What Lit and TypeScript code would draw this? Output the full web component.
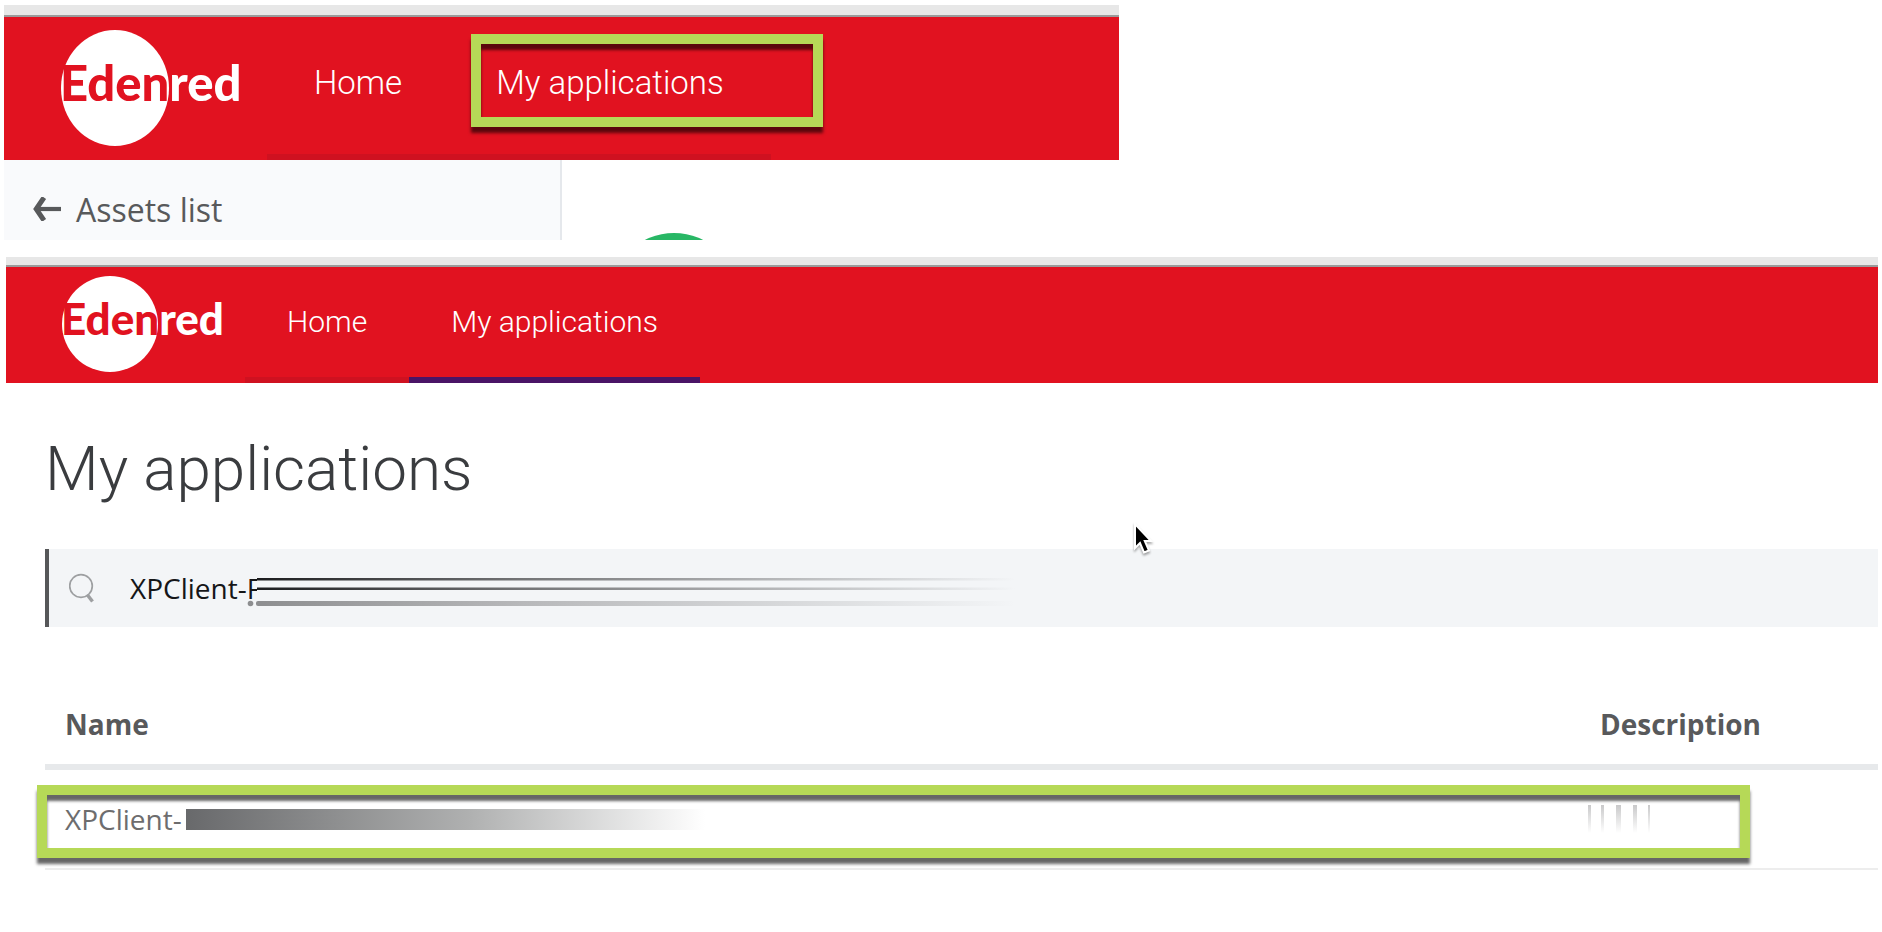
import { LitElement, html, css, svg } from "lit";
import { customElement } from "lit/decorators.js";

const logoLarge = html`
  <svg class="logo" width="180" height="118" viewBox="0 0 180 118" role="img" aria-label="Edenred">
    <ellipse cx="54" cy="58" rx="54" ry="58" fill="#fff" />
    ${svg`<text class="word" x="-1" y="71" font-size="49"><tspan fill="#e11220">Eden</tspan><tspan fill="#fff">red</tspan></text>`}
  </svg>
`;

const logoSmall = html`
  <svg class="logo" width="162" height="96" viewBox="0 0 162 96" role="img" aria-label="Edenred">
    <circle cx="48" cy="47" r="48" fill="#fff" />
    ${svg`<text class="word" x="-1" y="58" font-size="44"><tspan fill="#e11220">Eden</tspan><tspan fill="#fff">red</tspan></text>`}
  </svg>
`;

@customElement("app-root")
export class AppRoot extends LitElement {
  static styles = css`
    :host {
      display: block;
      background: #fff;
      color: #58595b;
      font-family: "Open Sans", "Noto Sans", sans-serif;
      overflow-x: hidden;
      padding-top: 5px;
    }
    * {
      box-sizing: border-box;
    }
    .assets {
      max-width: 1115px;
      margin-left: 4px;
    }
    .chrome {
      height: 12px;
      background: #e7e7e7;
      border-bottom: 2px solid #9b9b9b;
    }
    .apps .chrome {
      height: 10px;
    }
    .bar {
      display: flex;
      align-items: center;
      background: #e11220;
      height: 143px;
      padding-left: 57px;
    }
    .apps .bar {
      height: 116px;
      padding-left: 56px;
    }
    .logo {
      display: block;
      flex: none;
      overflow: visible;
    }
    .word {
      font-family: Lato, sans-serif;
      font-weight: 900;
    }
    nav {
      display: flex;
      align-self: stretch;
      margin-left: 26px;
    }
    .apps nav {
      margin-left: 21px;
    }
    .link {
      position: relative;
      display: flex;
      align-items: center;
      padding: 0 47px 6px;
      border-bottom: 6px solid #cf1120;
      color: #fff;
      font-family: Roboto, sans-serif;
      font-size: 33px;
      font-weight: 300;
      text-decoration: none;
      white-space: nowrap;
    }
    .apps .link {
      padding: 0 42px 2px;
      font-size: 30px;
    }
    .apps .link.current {
      border-bottom-color: #4a1466;
    }
    .frame {
      position: absolute;
      border: 10px solid #b6d957;
      box-shadow: 0 6px 3px rgba(0, 0, 0, 0.6), inset 0 6px 3px rgba(0, 0, 0, 0.6);
      pointer-events: none;
    }
    .link .frame {
      left: 22px;
      right: -52px;
      top: 17px;
      height: 93px;
    }
    .below {
      display: flex;
      height: 80px;
    }
    .side {
      flex: 0 0 50%;
      background: #f9fafc;
      border-right: 2px solid #e5e8ec;
      padding-left: 29px;
      display: flex;
      align-items: center;
    }
    .back {
      display: flex;
      align-items: center;
      gap: 15px;
      height: 44px;
      margin-top: 18px;
      color: #58595b;
      font-size: 32px;
      text-decoration: none;
    }
    .detail {
      flex: 1;
      overflow: hidden;
      padding: 73px 0 0 48px;
    }
    .badge {
      width: 128px;
      height: 128px;
      border-radius: 50%;
      background: #28b765;
    }
    .apps {
      margin: 17px 4px 0 6px;
    }
    main {
      padding: 50px 0 0 39px;
    }
    h1 {
      margin: 0;
      color: #3a3c3f;
      font-family: Roboto, sans-serif;
      font-size: 62px;
      font-weight: 300;
      line-height: 72px;
    }
    .search {
      position: relative;
      display: flex;
      align-items: center;
      height: 78px;
      margin-top: 44px;
      padding-left: 20px;
      gap: 35px;
      background: #f3f5f7;
      border-left: 4px solid #565759;
    }
    .search input {
      flex: 1;
      min-width: 0;
      height: 100%;
      margin: 0;
      padding: 0;
      border: 0;
      outline: 0;
      background: transparent;
      color: #151618;
      font: 28px "Open Sans", "Noto Sans", sans-serif;
    }
    .smear {
      position: absolute;
      left: 198px;
      top: 28px;
      pointer-events: none;
    }
    .pointer {
      position: absolute;
      left: 1083px;
      top: -27px;
      filter: drop-shadow(0 2px 1px rgba(0, 0, 0, 0.35));
      pointer-events: none;
    }
    table {
      width: 100%;
      margin-top: 57px;
      border-spacing: 0;
      table-layout: fixed;
      font-size: 28px;
      line-height: 38px;
      text-align: left;
    }
    .desc {
      width: 298px;
    }
    th {
      padding: 21px 20px;
      border-bottom: 6px solid #e7e9eb;
      font-weight: 700;
    }
    td {
      padding: 30px 8px;
      border-bottom: 2px solid #ededed;
    }
    td:first-child {
      padding-left: 20px;
    }
    tbody tr {
      position: relative;
    }
    .name {
      display: flex;
      align-items: center;
      color: #6d6d6e;
    }
    .mask {
      width: 519px;
      height: 21px;
      margin-left: 4px;
      background: linear-gradient(90deg, #68696b, #b0b1b1 55%, #fff);
    }
    .ticks {
      display: block;
    }
    tr .frame {
      left: -8px;
      right: 128px;
      top: 15px;
      height: 73px;
    }
  `;

  render() {
    return html`
      <section class="assets">
        <div class="chrome"></div>
        <header class="bar">
          ${logoLarge}
          <nav aria-label="Assets">
            <a class="link" href="#home">Home</a>
            <a class="link" href="#applications">My applications<span class="frame"></span></a>
          </nav>
        </header>
        <div class="below">
          <aside class="side">
            <a class="back" href="#assets">
              <svg width="28" height="24" viewBox="0 0 28 24" fill="none" stroke="#58595b">
                <path d="M3 12H28" stroke-width="4.200" />
                <path d="M11 0.500L3.200 12l7.800 11.500" stroke-width="5" />
              </svg>
              Assets list
            </a>
          </aside>
          <div class="detail"><div class="badge"></div></div>
        </div>
      </section>

      <section class="apps">
        <div class="chrome"></div>
        <header class="bar">
          ${logoSmall}
          <nav aria-label="Applications">
            <a class="link" href="#home">Home</a>
            <a class="link current" href="#applications" aria-current="page">My applications</a>
          </nav>
        </header>
        <main>
          <h1>My applications</h1>
          <div class="search">
            <svg width="26" height="30" viewBox="0 0 26 30" fill="none" stroke="#9d9fa1">
              <circle cx="12" cy="13" r="11.300" stroke-width="1.700" />
              <path d="M18.500 22l5 6.500" stroke-width="3.500" />
            </svg>
            <input type="text" aria-label="Search applications" value="XPClient-F" />
            <svg class="smear" width="770" height="30" viewBox="0 0 770 30" aria-hidden="true">
              <defs>
                <linearGradient id="dark" gradientUnits="userSpaceOnUse" x1="9" y1="0" x2="768" y2="0">
                  <stop offset="0" stop-color="#1b1c1e" />
                  <stop offset="0.350" stop-color="#737476" />
                  <stop offset="1" stop-color="#f3f5f7" />
                </linearGradient>
                <linearGradient id="grey" gradientUnits="userSpaceOnUse" x1="9" y1="0" x2="768" y2="0">
                  <stop offset="0" stop-color="#8d8e90" />
                  <stop offset="0.350" stop-color="#b7b8ba" />
                  <stop offset="1" stop-color="#f3f5f7" />
                </linearGradient>
              </defs>
              <rect x="10" y="0" width="758" height="30" fill="#f3f5f7" />
              <rect x="10" y="1" width="758" height="2.500" fill="url(#dark)" />
              <rect x="10" y="10.500" width="758" height="2.500" fill="url(#dark)" />
              <rect x="9" y="24" width="759" height="5" rx="2" fill="url(#grey)" />
              <circle cx="3.500" cy="26.500" r="2.800" fill="#8d8e90" />
            </svg>
            <svg class="pointer" width="24" height="34" viewBox="0 0 24 34" aria-hidden="true">
              <path d="M3 2v24l5-5 4 9.500 5-2-4.200-9.500h6.200z" fill="#000" stroke="#fff" stroke-width="2" />
            </svg>
          </div>
          <table>
            <colgroup>
              <col />
              <col class="desc" />
            </colgroup>
            <thead>
              <tr>
                <th scope="col">Name</th>
                <th scope="col">Description</th>
              </tr>
            </thead>
            <tbody>
              <tr>
                <td>
                  <div class="name">XPClient-<span class="mask"></span></div>
                  <span class="frame"></span>
                </td>
                <td>
                  <svg class="ticks" width="66" height="28" viewBox="0 0 66 28" aria-hidden="true">
                    <defs>
                      <linearGradient id="fade" x1="0" y1="0" x2="0" y2="1">
                        <stop offset="0" stop-color="#c9c9ca" />
                        <stop offset="1" stop-color="#fff" />
                      </linearGradient>
                    </defs>
                    <rect x="0" y="0" width="3" height="28" fill="url(#fade)" />
                    <rect x="13" y="0" width="3" height="28" fill="url(#fade)" />
                    <rect x="28" y="0" width="5" height="28" fill="url(#fade)" />
                    <rect x="45" y="0" width="4" height="28" fill="url(#fade)" />
                    <rect x="60" y="0" width="2" height="28" fill="url(#fade)" />
                  </svg>
                </td>
              </tr>
            </tbody>
          </table>
        </main>
      </section>
    `;
  }
}
